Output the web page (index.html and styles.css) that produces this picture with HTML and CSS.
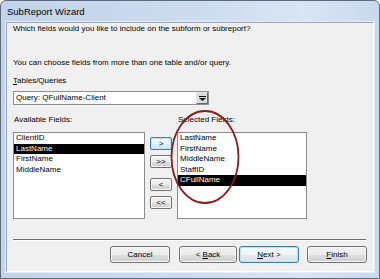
FILE: index.html
```html
<!DOCTYPE html>
<html lang="en">
<head>
<meta charset="UTF-8">
<meta name="viewport" content="width=device-width, initial-scale=1.0">
<title>SubReport Wizard</title>
<link rel="stylesheet" href="styles.css">
</head>
<body>

<div class="window">
  <!-- Title bar -->
  <div class="titlebar">SubReport Wizard</div>

  <div class="client">
    <p class="prompt">Which fields would you like to include on the subform or subreport?</p>
    <p class="hint">You can choose fields from more than one table and/or query.</p>

    <div class="field-label"><u>T</u>ables/Queries</div>
    <div class="combo">
      <span class="combo-text">Query: QFullName-Client</span>
      <span class="combo-btn">
        <svg width="7" height="5" viewBox="0 0 7 5"><rect x="0" y="0" width="7" height="1" fill="#000"/><path d="M0 2h7l-3.5 3z" fill="#000"/></svg>
      </span>
    </div>

    <!-- Field pickers -->
    <div class="fields">
      <div class="list-label">Available Fields:</div>
      <div></div>
      <div class="list-label selected-label">Selected Fields:</div>

      <ul class="list">
        <li>ClientID</li>
        <li class="active">LastName</li>
        <li>FirstName</li>
        <li>MiddleName</li>
      </ul>

      <div class="movers">
        <button class="mover focus" type="button">&gt;</button>
        <button class="mover" type="button">&gt;&gt;</button>
        <button class="mover gap" type="button">&lt;</button>
        <button class="mover" type="button">&lt;&lt;</button>
      </div>

      <ul class="list">
        <li>LastName</li>
        <li>FirstName</li>
        <li>MiddleName</li>
        <li>StaffID</li>
        <li class="active">CFullName</li>
      </ul>

      <!-- hand drawn circle over the selected list -->
      <svg class="circle" width="74" height="100" viewBox="0 0 74 100">
        <ellipse cx="36" cy="49" rx="33.5" ry="46" fill="none" stroke="#8b1a1a" stroke-width="1.8"/>
      </svg>
    </div>

    <div class="separator"></div>

    <div class="footer">
      <button class="btn" type="button">Cancel</button>
      <button class="btn back" type="button">&lt; <u>B</u>ack</button>
      <button class="btn next" type="button"><u>N</u>ext &gt;</button>
      <button class="btn finish" type="button"><u>F</u>inish</button>
    </div>
  </div>
</div>

</body>
</html>
```

FILE: styles.css
```css
/* Page */
body {
  margin: 0;
  background: #ffffff;
  font-family: "Liberation Sans", Arial, sans-serif;
  font-size: 8px;
  color: #000;
}

/* Window frame */
.window {
  width: 378px;
  height: 277px;
  border: 1px solid #5d6b7c;
  border-radius: 6px 6px 0 0;
  background: linear-gradient(90deg, #c3d4ea 0%, #cddcee 55%, #d9e5f3 80%, #c8d8ec 100%);
  display: flex;
  flex-direction: column;
}

.titlebar {
  height: 21px;
  line-height: 22px;
  padding-left: 6px;
  font-size: 9.5px;
  color: #000;
}

/* Dialog body */
.client {
  flex: 1;
  margin: 0 5px 6px 5px;
  border: 1px solid;
  border-color: #97a6b9 #ffffff #ffffff #97a6b9;
  background: #f0f0f0;
  padding-left: 6px;
  box-shadow: 0 0 0 1px #e4edf7;
}

.prompt,
.hint {
  margin: 0;
  line-height: 11px;
}

.hint {
  margin-top: 23px;
}

.field-label {
  margin-top: 7px;
  line-height: 11px;
}

/* Tables/Queries combo */
.combo {
  margin-top: 5px;
  width: 196px;
  height: 14px;
  box-sizing: border-box;
  border: 1px solid #8e8f8f;
  background: #fff;
  display: flex;
  align-items: center;
}

.combo-text {
  flex: 1;
  padding-left: 2px;
  line-height: 12px;
}

.combo-btn {
  width: 12px;
  height: 12px;
  box-sizing: border-box;
  border: 1px solid;
  border-color: #e8e8e8 #6a6a6a #6a6a6a #e8e8e8;
  background: #dcdcdc;
  display: flex;
  align-items: center;
  justify-content: center;
}

/* Field lists */
.fields {
  position: relative;
  margin-top: 9px;
  display: grid;
  grid-template-columns: 132px 22px 130px;
  column-gap: 5px;
  row-gap: 7px;
}

.list-label {
  line-height: 11px;
  padding-left: 1px;
}

.list {
  margin: 0;
  padding: 0;
  list-style: none;
  height: 87px;
  box-sizing: border-box;
  border: 1px solid #8c8c8c;
  background: #fff;
}

.list li {
  height: 10.5px;
  line-height: 10.5px;
  padding-left: 2px;
  white-space: nowrap;
}

.list li.active {
  background: #000;
  color: #fff;
}

.movers {
  display: flex;
  flex-direction: column;
  gap: 5px;
  padding-top: 5px;
}

.mover {
  width: 22px;
  height: 13px;
  padding: 0;
  font-family: inherit;
  font-size: 8px;
  line-height: 11px;
  color: #000;
  border: 1px solid #707070;
  border-radius: 2px;
  background: linear-gradient(#f3f3f3 0%, #ebebeb 50%, #dddddd 51%, #cfcfcf 100%);
  box-shadow: inset 0 0 0 1px #fbfbfb;
}

.mover.gap {
  margin-top: 5px;
}

.mover.focus,
.btn.next {
  border-color: #3c7fb1;
  background: linear-gradient(#f4f9fc 0%, #eef4f8 50%, #e2ebf1 51%, #d8e3ea 100%);
  box-shadow: inset 0 0 0 1px #bfe3f6;
}

/* Red annotation circle */
.circle {
  position: absolute;
  left: 156px;
  top: -6px;
}

/* Separator and wizard buttons */
.separator {
  margin-top: 20px;
  margin-right: 7px;
  border-top: 1px solid #6e6e6e;
  border-bottom: 1px solid #ffffff;
  height: 0;
}

.footer {
  margin-top: 5px;
  padding-right: 6px;
  display: flex;
  justify-content: flex-end;
}

.btn {
  width: 60px;
  height: 17px;
  padding: 0;
  font-family: inherit;
  font-size: 8px;
  color: #000;
  border: 1px solid #707070;
  border-radius: 3px;
  background: linear-gradient(#f2f2f2 0%, #ebebeb 50%, #dddddd 51%, #cfcfcf 100%);
  box-shadow: inset 0 0 0 1px #fbfbfb;
}

.btn.back {
  margin-left: 9px;
  width: 58px;
}

.btn.next {
  margin-left: 2px;
}

.btn.finish {
  margin-left: 8px;
}
```
